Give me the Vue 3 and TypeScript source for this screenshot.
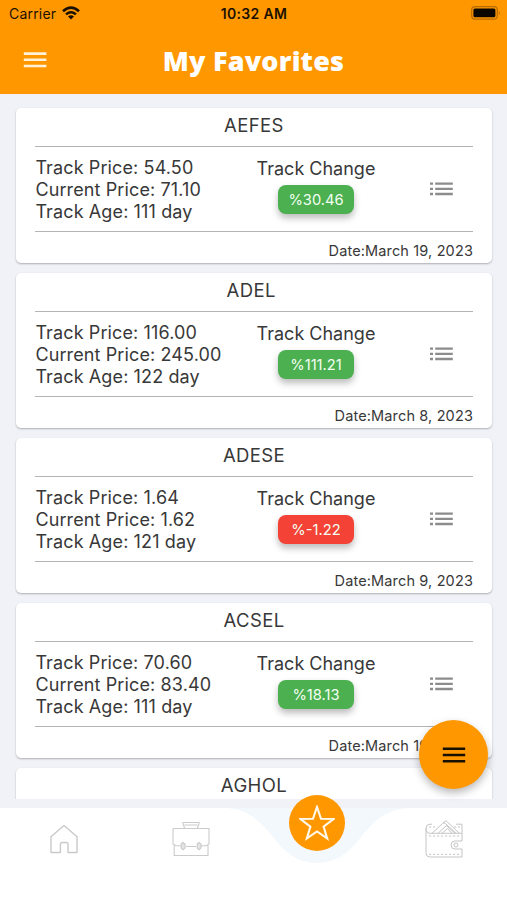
<script setup lang="ts">
interface Favorite {
  symbol: string
  price: string
  current: string
  age: number
  change: string
  date: string
}

const favorites: Favorite[] = [
  { symbol: 'AEFES', price: '54.50', current: '71.10', age: 111, change: '30.46', date: 'March 19, 2023' },
  { symbol: 'ADEL\u00a0', price: '116.00', current: '245.00', age: 122, change: '111.21', date: 'March 8, 2023' },
  { symbol: 'ADESE', price: '1.64', current: '1.62', age: 121, change: '-1.22', date: 'March 9, 2023' },
  { symbol: 'ACSEL', price: '70.60', current: '83.40', age: 111, change: '18.13', date: 'March 19, 2023' },
  { symbol: 'AGHOL', price: '', current: '', age: 111, change: '', date: '' },
]
</script>

<template>
  <div class="screen">
    <header class="header">
      <div class="status">
        <div class="carrier">
          <span>Carrier</span>
          <svg class="wifi" width="18" height="14" viewBox="0 0 18 14">
            <path d="M1 5.2 Q9 -1.8 17 5.2" fill="none" stroke="#1c1100" stroke-width="2.7" />
            <path d="M4 8.3 Q9 4 14 8.3" fill="none" stroke="#1c1100" stroke-width="2.4" />
            <path d="M6 10.4 Q9 8 12 10.4 L9 13.6Z" fill="#1c1100" />
          </svg>
        </div>
        <span class="time">10:32 AM</span>
        <svg class="battery" width="30" height="14" viewBox="0 0 30 14">
          <rect x=".7" y=".7" width="25.6" height="12.4" rx="3.4" fill="none" stroke="#b56c00" stroke-width="1.2" />
          <rect x="2.4" y="2.5" width="22" height="8.8" rx="1.6" fill="#0a0600" />
          <path d="M27.8 5 Q30 6.9 27.8 8.9Z" fill="#b56c00" />
        </svg>
      </div>
      <div class="appbar">
        <svg class="menu" width="24" height="16" viewBox="0 0 24 16">
          <path d="M.8 1.6H23.4M.8 7.8H23.4M.8 14H23.4" stroke="#fff1da" stroke-width="2.6" />
        </svg>
        <h1>My Favorites</h1>
      </div>
    </header>

    <main class="list">
      <article v-for="item in favorites" :key="item.symbol" class="card">
        <h2>{{ item.symbol }}</h2>
        <div v-if="item.price" class="body">
          <div class="facts">
            <div>Track Price: {{ item.price }}</div>
            <div>Current Price: {{ item.current }}</div>
            <div>Track Age: {{ item.age }} day</div>
          </div>
          <div class="change">
            <span>Track Change</span>
            <span class="badge" :class="{ down: item.change.startsWith('-') }">%{{ item.change }}</span>
          </div>
          <svg class="details" width="23" height="14" viewBox="0 0 23 14">
            <path d="M0 1.6H3M0 6.8H3M0 12H3M5.2 1.6H22.8M5.2 6.8H22.8M5.2 12H22.8" stroke="#8c8c8c" stroke-width="2.3" />
          </svg>
        </div>
        <div v-if="item.date" class="date">Date:{{ item.date }}</div>
      </article>
    </main>

    <nav class="nav">
      <svg class="nav-bg" width="507" height="92" viewBox="0 0 507 92">
        <rect width="507" height="92" fill="#f3f8fc" />
        <path d="M0 0H226C249 1 260 14 273 29C286 46 299 55 317 55C335 55 348 46 361 29C374 13 387 0 412 0H507V92H0Z" fill="#fff" />
      </svg>
      <div class="tab">
        <svg width="28" height="30" viewBox="0 0 28 30">
          <path d="M1 12.8 14 1.5 27 12.8V28.5H18V20.5Q18 18.5 16.5 18.5H12Q10.4 18.5 10.4 20.5V28.5H1Z" fill="none" stroke="#c9c9c9" stroke-width="1.4" stroke-linejoin="round" />
        </svg>
      </div>
      <div class="tab">
        <svg width="38" height="36" viewBox="0 0 38 36" fill="none" stroke="#cbcbcb" stroke-width="1.1">
          <path d="M1 7.5H37V23L34 24.7H29M24 25.5H14M9 24.7H4L1 23V7.5M2.2 24.3V34.5H36V24.3M12.8 7.5 11 3V1.5H27V3L25.2 7.5M12.4 4H25.6" />
          <path d="M9.2 23 11 21.5 13 23V27L11 28.7 9.2 27ZM25.2 23 27 21.5 29 23V27L27 28.7 25.2 27Z" fill="#e4e4e4" />
        </svg>
      </div>
      <div class="tab"></div>
      <div class="tab">
        <svg width="38" height="38" viewBox="0 0 38 38" fill="none" stroke="#c5c5c5" stroke-width="1">
          <path d="M7 4.2H5Q1 4.2 1 8.2V33Q1 37 5 37H37V28.8M37 21V13.3H5Q1 13.3 1 8.2M37 13.3V4.2H31" />
          <path d="M7 13.3 17.5 3.6Q19 2.2 20.5 3.6L31 13.3M13 13.3 21.5 5.6 30 13.3M17 13.3 22.5 8.5 27 13.3M18 2.8 21 .7 34 13" />
          <path d="M37 21H30Q26 21 26 25T30 29H37M33 25A2 2 0 1 1 29 25A2 2 0 1 1 33 25" />
          <path d="M4 16H35M4 34.3H35M4 7H10M29 7H35" stroke-dasharray="2.2 1.8" />
        </svg>
      </div>
      <div class="star">
        <svg width="36" height="36" viewBox="0 0 36 36">
          <path d="M18 2 22 13.8 34.5 14 24.6 21.6 28.2 33.4 18 26.5 7.8 33.4 11.4 21.6 1.5 14 14 13.8Z" fill="none" stroke="#fff8eb" stroke-width="2.1" />
        </svg>
      </div>
    </nav>

    <button class="fab" aria-label="Menu">
      <svg width="24" height="16" viewBox="0 0 24 16">
        <path d="M.8 1.8H23.2M.8 8H23.2M.8 14.2H23.2" stroke="#171000" stroke-width="2.5" />
      </svg>
    </button>
  </div>
</template>

<style>
body {
  margin: 0;
}
</style>

<style scoped>
.screen {
  position: relative;
  display: flex;
  flex-direction: column;
  width: 507px;
  height: 900px;
  overflow: hidden;
  background: #f0f2f8;
  color: #383838;
  font-family: Inter, "Liberation Sans", sans-serif;
}
.header {
  height: 94px;
  flex: none;
  background: #ff9800;
}
.status {
  display: grid;
  grid-template-columns: 1fr auto 1fr;
  align-items: center;
  height: 28px;
  padding: 0 6px 0 9px;
  color: #1c1100;
  font-size: 14px;
}
.carrier {
  display: flex;
  align-items: center;
  gap: 6px;
  margin-top: -1px;
  letter-spacing: 0.2px;
}
.wifi {
  margin-top: -2px;
}
.time {
  margin: -1px 2px 0 0;
  font-weight: 600;
  letter-spacing: 0.35px;
}
.battery {
  justify-self: end;
  margin-top: -2px;
}
.appbar {
  display: grid;
  grid-template-columns: 80px 1fr 80px;
  align-items: center;
  height: 66px;
}
.menu {
  margin: -2px 0 0 23px;
}
h1 {
  margin: 0;
  color: #fff;
  font: 800 27px/40px "Open Sans", sans-serif;
  letter-spacing: 0.2px;
  text-align: center;
}
.list {
  height: 705px;
  flex: none;
  box-sizing: border-box;
  padding: 14px 15px 0 16px;
  overflow: hidden;
}
.card {
  box-sizing: border-box;
  height: 155px;
  margin-bottom: 10px;
  padding: 0 19px;
  border-radius: 5px;
  background: #fff;
  box-shadow: 0 1px 2px rgba(0, 0, 0, 0.28);
}
h2 {
  height: 38px;
  margin: 0;
  font-size: 18.5px;
  font-weight: 400;
  line-height: 35px;
  letter-spacing: 0.4px;
  text-align: center;
}
.body {
  display: grid;
  grid-template-columns: 187px 188px 1fr;
  box-sizing: border-box;
  height: 86px;
  border: solid #b4b4b4;
  border-width: 1px 0;
}
.facts {
  padding: 10px 0 0 0.4px;
  font-size: 18px;
  line-height: 22px;
  letter-spacing: 0.12px;
  white-space: nowrap;
}
.change {
  display: flex;
  flex-direction: column;
  align-items: center;
  padding-top: 11px;
  font-size: 18px;
  line-height: 22px;
}
.badge {
  width: 76px;
  height: 29px;
  margin-top: 5px;
  border-radius: 8px;
  background: #4caf50;
  box-shadow: 0 4px 7px rgba(0, 0, 0, 0.27);
  color: #f2fff2;
  font-size: 14.7px;
  line-height: 30px;
  text-align: center;
}
.badge.down {
  background: #f44336;
}
.details {
  align-self: center;
  margin-left: 20px;
}
.date {
  font-size: 14.5px;
  line-height: 37px;
  letter-spacing: 0.14px;
  text-align: right;
}
.nav {
  position: relative;
  display: grid;
  grid-template-columns: repeat(4, 1fr);
  height: 92px;
  margin-top: auto;
}
.nav-bg {
  position: absolute;
  inset: 0;
}
.tab {
  position: relative;
  display: flex;
  justify-content: center;
  align-items: center;
  height: 62px;
  padding-left: 1px;
}
.star {
  position: absolute;
  top: -13px;
  left: 289px;
  display: flex;
  justify-content: center;
  align-items: center;
  width: 56px;
  height: 56px;
  border-radius: 50%;
  background: #ff9800;
}
.fab {
  position: absolute;
  top: 720px;
  left: 419px;
  display: flex;
  justify-content: center;
  align-items: center;
  width: 69px;
  height: 69px;
  padding: 0;
  border: 0;
  border-radius: 50%;
  background: #ff9800;
  box-shadow: 0 4px 8px rgba(0, 0, 0, 0.28);
}
</style>
